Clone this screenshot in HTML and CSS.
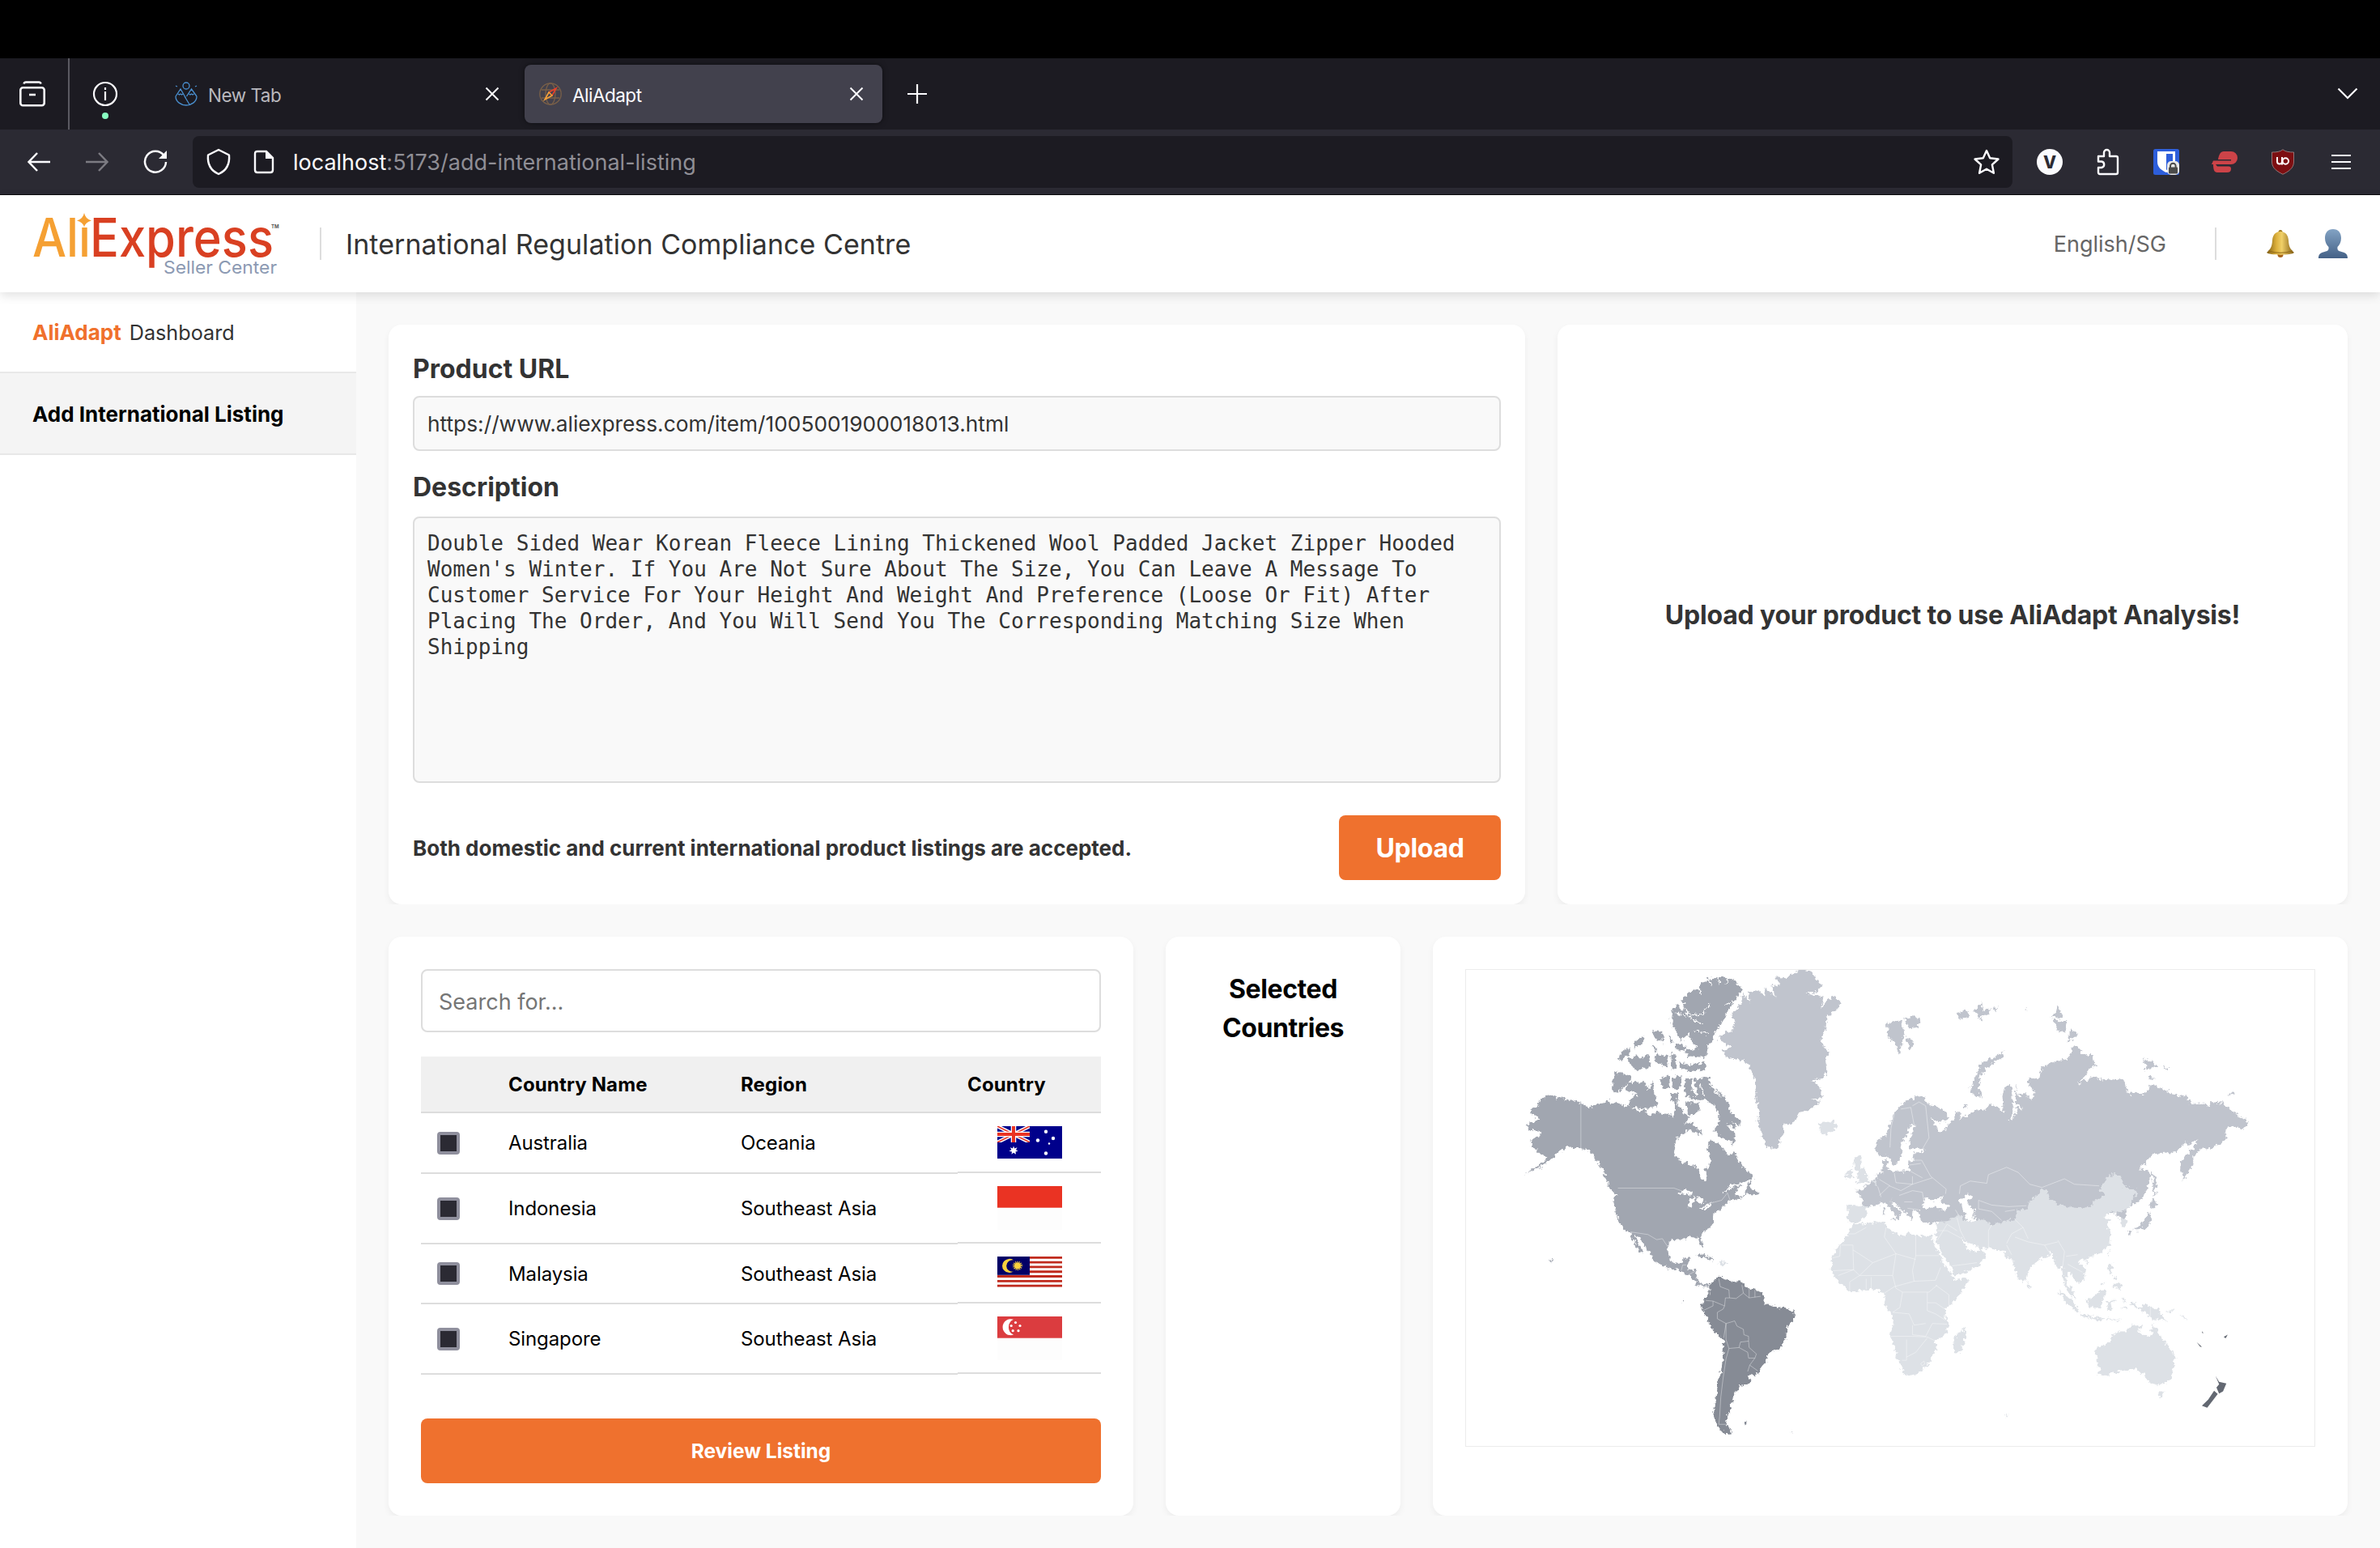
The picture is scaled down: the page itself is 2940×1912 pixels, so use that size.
FILE: index.html
```html
<!DOCTYPE html>
<html lang="en">
<head>
<meta charset="utf-8">
<title>AliAdapt</title>
<link rel="stylesheet" href="styles.css">
</head>
<body>
<div class="notch"></div>
<div class="tabs">
  <div class="tabs-view"><svg width="32" height="32" viewBox="0 0 32 32" fill="none" stroke="#fbfbfe" stroke-width="2.6"><path d="M5.500 3.500q.5-2 2.500-2h16q2 0 2.500 2"/><rect x="1.300" y="8.300" width="29.400" height="22" rx="3"/><path d="M12 17h8"/></svg></div>
  <div class="pinned"><svg width="32" height="32" viewBox="0 0 32 32" fill="none" stroke="#fbfbfe" stroke-width="2.200"><circle cx="16" cy="16" r="14"/><path d="M16 13v11M16 8v3"/></svg><i class="pin-dot"></i></div>
  <div class="tab">
    <svg width="28" height="32" viewBox="0 0 28 32" fill="none" stroke="#4a90d0" stroke-width="1.300"><circle cx="14" cy="6" r="4"/><path d="M1 6l2 1M25 7l2-1M1 19L7 10l6.500 11M14.500 19L20.500 10l6.500 9M4 16l1.500 1 1.500-1 1.500 1 1.500-1M17.500 16l1.500 1 1.500-1 1.500 1 1.500-1M12 19l6 10M1 19c0 7 7 11 13 11s13-4 13-11"/></svg>
    <span class="tab-title">New Tab</span>
    <svg width="18" height="18" viewBox="0 0 18 18" fill="none" stroke="#fbfbfe" stroke-width="2"><path d="M1.500 1.500l15 15M16.500 1.500l-15 15"/></svg>
  </div>
  <div class="tab tab-on">
    <svg width="28" height="32" viewBox="0 0 28 32" fill="none" stroke="#7a6048" stroke-width="1.300"><circle cx="14" cy="16" r="13.200"/><ellipse cx="14" cy="16" rx="6" ry="13.200"/><path d="M3 11h22M3 21h22"/><path d="M12 14l9-5-5 9" stroke="#e8402a" stroke-width="1.600"/><path d="M12 14l-5 9 9-5z" stroke="#f6a13a" stroke-width="1.600"/></svg>
    <span class="tab-title">AliAdapt</span>
    <svg width="18" height="18" viewBox="0 0 18 18" fill="none" stroke="#fbfbfe" stroke-width="2"><path d="M1.500 1.500l15 15M16.500 1.500l-15 15"/></svg>
  </div>
  <svg class="tab-new" width="26" height="26" viewBox="0 0 26 26" fill="none" stroke="#fbfbfe" stroke-width="2.200"><path d="M13 1v24M1 13h24"/></svg>
  <svg class="tab-all" width="26" height="16" viewBox="0 0 26 16" fill="none" stroke="#fbfbfe" stroke-width="2.200"><path d="M1.500 1.500L13 13 24.500 1.500"/></svg>
</div>
<div class="toolbar">
  <div class="nav">
    <svg width="30" height="30" viewBox="0 0 30 30" fill="none" stroke="#fbfbfe" stroke-width="2.500"><path d="M29 15H2.500M13 4L2.500 15 13 26"/></svg>
    <svg width="30" height="30" viewBox="0 0 30 30" fill="none" stroke="#7c7b82" stroke-width="2.500"><path d="M1 15h26.500M17 4l10.500 11L17 26"/></svg>
    <svg width="30" height="30" viewBox="0 0 30 30" fill="none" stroke="#fbfbfe" stroke-width="2.500"><path d="M25.500 7A13 13 0 1 0 28 15"/><path d="M29 1v10H19z" fill="#fbfbfe" stroke="none"/></svg>
  </div>
  <div class="urlbar">
    <svg width="32" height="34" viewBox="0 0 32 34" fill="none" stroke="#fbfbfe" stroke-width="2.400" stroke-linejoin="round"><path d="M16 2L29 8.500C30 20 25 28 16 32 7 28 2 20 3 8.500z"/></svg>
    <svg class="page-icon" width="26" height="30" viewBox="0 0 26 30" fill="none" stroke="#fbfbfe" stroke-width="2.400"><path d="M16 2H5Q2 2 2 5v20q0 3 3 3h16q3 0 3-3V10z"/><path d="M15 1v10h10z" fill="#fbfbfe" stroke="none"/></svg>
    <span class="url"><b>localhost</b>:5173/add-international-listing</span>
    <svg width="34" height="34" viewBox="0 0 34 34" fill="none" stroke="#fbfbfe" stroke-width="2.400" stroke-linejoin="round"><path d="M17 3l4.200 9.300 10.300 1.200-7.600 6.900 2 10.400L17 25.700 8.100 30.800l2-10.400-7.600-6.900 10.300-1.200z"/></svg>
  </div>
  <div class="extensions">
    <svg width="32" height="32" viewBox="0 0 32 32"><circle cx="16" cy="16" r="16" fill="#fbfbfe"/><text x="16" y="23.500" class="ext-v">V</text></svg>
    <svg width="32" height="34" viewBox="0 0 32 34" fill="none" stroke="#fbfbfe" stroke-width="2.400" stroke-linejoin="round"><path d="M4 10h7V5.500a3.500 3.500 0 0 1 7 0V10h8q2 0 2 2v18q0 2-2 2H6q-2 0-2-2v-6h4a3.800 3.800 0 0 0 0-7.500H4z"/></svg>
    <svg width="32" height="32" viewBox="0 0 32 32"><rect width="32" height="32" rx="2.500" fill="#2d5edb"/><path d="M5 3h22v13c0 7-6 11-11 13C11 27 5 23 5 16z" fill="#fff"/><path d="M16 6h8v10c0 5-4 8-8 10z" fill="#2d5edb"/><rect x="17" y="15" width="15" height="17" rx="5" fill="#e8e8e8"/><path d="M21 23v-2a3.300 3.300 0 0 1 6.600 0v2" fill="none" stroke="#4a4a4a" stroke-width="2"/><rect x="19" y="22.500" width="11" height="8" rx="1" fill="#4a4a4a"/></svg>
    <svg width="32" height="28" viewBox="0 0 32 28" fill="#cc4348"><path d="M15 1h9a8 8 0 0 1 0 16H0l2-4.500h22V11H8C9 5 11 1 15 1z"/><path d="M2 17h3l2 2.500h14q3 0 3 3 0 4.500-5 4.500H7C3 27 2 23 2 17z"/></svg>
    <svg width="30" height="32" viewBox="0 0 30 32"><path d="M15 .7C18 3.500 23 4 28.500 4v12c0 8-7 12-13.500 15.300C8.500 28 1.500 24 1.500 16V4C7 4 12 3.500 15 .7z" fill="#7d0f12" stroke="#a58a8a" stroke-width=".8"/><path d="M8 10v5.500a3 3 0 0 0 6 0V10M14 19.500V15" fill="none" stroke="#fff" stroke-width="2"/><circle cx="18.300" cy="15" r="3.700" fill="none" stroke="#fff" stroke-width="2"/></svg>
    <svg width="26" height="20" viewBox="0 0 26 20" stroke="#fbfbfe" stroke-width="2.200"><path d="M1 2h24M1 10h24M1 18h24"/></svg>
  </div>
</div>
<header class="header">
  <svg class="logo" width="316" height="92" viewBox="34 254 316 92">
    <text x="40" y="316" class="logo-a" textLength="72" lengthAdjust="spacingAndGlyphs">Ali</text>
    <rect x="97" y="258" width="15" height="21" fill="#fff"/>
    <path d="M104 262q1.500 7.500 9 9.500-7.500 2-9 8-1.500-6-9-8 7.500-2 9-9.500z" fill="#f5a033"/>
    <text x="111" y="316" class="logo-e" textLength="227" lengthAdjust="spacingAndGlyphs">Express</text>
    <text x="202" y="337" class="logo-s" textLength="140" lengthAdjust="spacingAndGlyphs">Seller Center</text>
    <text x="335" y="281" class="logo-t">TM</text>
  </svg>
  <i class="bar"></i>
  <h1>International Regulation Compliance Centre</h1>
  <span class="lang">English/SG</span>
  <i class="bar"></i>
  <svg class="bell" width="36" height="36" viewBox="0 0 36 36">
    <defs><linearGradient id="gold"><stop offset="0" stop-color="#7d5a10"/><stop offset=".35" stop-color="#dcb03c"/><stop offset=".55" stop-color="#f0d068"/><stop offset="1" stop-color="#805a10"/></linearGradient></defs>
    <circle cx="18" cy="31.500" r="3.500" fill="#a8641c"/><circle cx="18" cy="3.500" r="2.500" fill="#a07a1e"/>
    <path d="M18 3c7 0 9.500 5 10 11 .4 7 1.500 10 7 15-3 3.500-31 3.500-34 0C6.500 24 7.600 21 8 14c.5-6 3-11 10-11z" fill="url(#gold)"/>
    <path d="M3 27q15 4.500 30 0" fill="none" stroke="#8f6715" stroke-width="1.200"/>
  </svg>
  <svg width="36" height="36" viewBox="0 0 36 36">
    <defs><linearGradient id="steel" x2="0" y2="1"><stop offset="0" stop-color="#83a3c4"/><stop offset="1" stop-color="#446186"/></linearGradient></defs>
    <path d="M18 0c6.500 0 10 4.500 10 11 0 5-2 8.500-4.500 11-.5 4 1 5 5 6 5 1 7.500 3 7.500 8H0c0-5 2.500-7 7.500-8 4-1 5.500-2 5-6C10 19.500 8 16 8 11 8 4.500 11.500 0 18 0z" fill="url(#steel)"/>
  </svg>
</header>
<div class="body">
  <nav class="sidebar">
    <a class="side-item"><b>AliAdapt</b> <span>Dashboard</span></a>
    <a class="side-item side-on">Add International Listing</a>
  </nav>
  <main class="main">
    <div class="row row-top">
      <section class="card form">
        <h2>Product URL</h2>
        <div class="field">https://www.aliexpress.com/item/1005001900018013.html</div>
        <h2 class="h-desc">Description</h2>
        <div class="area">Double Sided Wear Korean Fleece Lining Thickened Wool Padded Jacket Zipper Hooded
Women's Winter. If You Are Not Sure About The Size, You Can Leave A Message To
Customer Service For Your Height And Weight And Preference (Loose Or Fit) After
Placing The Order, And You Will Send You The Corresponding Matching Size When
Shipping</div>
        <div class="form-foot"><p>Both domestic and current international product listings are accepted.</p><button class="btn btn-up">Upload</button></div>
      </section>
      <section class="card notice">Upload your product to use AliAdapt Analysis!</section>
    </div>
    <div class="row row-low">
      <section class="card picker">
        <div class="search">Search for...</div>
        <div class="table">
          <div class="tr th"><span></span><span>Country Name</span><span>Region</span><span>Country</span></div>
          <div class="tr"><span><i class="check"></i></span><span>Australia</span><span>Oceania</span><span class="flag">
            <svg width="80" height="40" viewBox="0 0 80 40"><rect width="80" height="40" fill="#00008b"/><svg width="40" height="20" viewBox="0 0 40 20"><path d="M0 0l40 20M40 0L0 20" stroke="#fff" stroke-width="4.500"/><path d="M0 0l40 20M40 0L0 20" stroke="#e8372a" stroke-width="1.600"/><path d="M20 0v20M0 10h40" stroke="#fff" stroke-width="6.500"/><path d="M20 0v20M0 10h40" stroke="#ea3323" stroke-width="4"/></svg><g fill="#fff"><path d="M20 24.500l1.300 3.100 3.200-1.300-1.500 3 2.600 1.400-3.100.8.500 3.300-3-2-2.500 2 .5-3.300-3.600-.8 3-1.400-1.500-3 3.200 1.300z"/><circle cx="60" cy="6.700" r="2.200"/><circle cx="50" cy="17.500" r="2.200"/><circle cx="69" cy="15" r="2.200"/><circle cx="60" cy="33.500" r="2.200"/><circle cx="64" cy="21.500" r="1.200"/></g></svg></span></div>
          <div class="tr tall"><span><i class="check"></i></span><span>Indonesia</span><span>Southeast Asia</span><span class="flag">
            <svg width="80" height="54" viewBox="0 0 80 54"><rect width="80" height="54" fill="#fdfdfd"/><rect width="80" height="26.700" fill="#ea3323"/></svg></span></div>
          <div class="tr short"><span><i class="check"></i></span><span>Malaysia</span><span>Southeast Asia</span><span class="flag">
            <svg width="80" height="38" viewBox="0 0 80 40" preserveAspectRatio="none"><rect width="80" height="40" fill="#fff"/><path d="M0 1.400h80M0 7.500h80M0 13.600h80M0 19.700h80M0 25.800h80M0 31.900h80M0 38h80" stroke="#c02a1d" stroke-width="3"/><rect width="40" height="24" fill="#010066"/><path d="M20 4.500a9 9 0 1 0 0 15 7.600 7.600 0 1 1 0-15z" fill="#f8d13e"/><circle cx="25" cy="12" r="4" fill="#f8d13e"/><circle cx="25" cy="12" r="4.800" fill="none" stroke="#f8d13e" stroke-width="2.500" stroke-dasharray="1 1.150"/></svg></span></div>
          <div class="tr tall"><span><i class="check"></i></span><span>Singapore</span><span>Southeast Asia</span><span class="flag">
            <svg width="80" height="54" viewBox="0 0 80 54"><rect width="80" height="54" fill="#fdfdfd"/><rect width="80" height="26.700" fill="#db3c3f"/><g fill="#fff"><path d="M20 3.800a10 10 0 1 0 0 18.800 10.300 10.300 0 0 1 0-18.800z"/><circle cx="22.500" cy="7.500" r="1.600"/><circle cx="17.200" cy="11.500" r="1.600"/><circle cx="28" cy="11.500" r="1.600"/><circle cx="19.200" cy="17.700" r="1.600"/><circle cx="26" cy="17.700" r="1.600"/></g></svg></span></div>
        </div>
        <button class="btn btn-review">Review Listing</button>
      </section>
      <section class="card selected"><span>Selected</span><span>Countries</span></section>
      <section class="card mapcard">
        <svg class="map" width="1050" height="590" viewBox="1810 1197 1050 590">
          <defs><filter id="coast" x="-2%" y="-2%" width="104%" height="104%" color-interpolation-filters="sRGB"><feTurbulence type="fractalNoise" baseFrequency=".08" numOctaves="4" seed="4"/><feDisplacementMap in="SourceGraphic" scale="22" xChannelSelector="R" yChannelSelector="G"/></filter></defs>
          <g transform="translate(1800 1180) scale(.357143 .39541)">
            <g filter="url(#coast)">
            <g class="north">
              <path d="M320 433L345 444 375 450 410 457 428 464 465 475 482 470 500 462 525 452 530 466 545 458 575 468 600 473 618 486 650 484 662 500 690 490 735 497 748 508 757 462 775 480 800 508 785 530 815 520 830 540 850 560 835 560 820 545 800 548 775 558 760 575 750 600 755 630 780 645 835 665 842 695 858 706 865 690 858 665 875 655 877 635 868 610 872 578 900 585 925 605 935 625 958 612 968 635 985 660 1005 675 1022 685 1020 700 985 710 945 720 915 745 960 722 985 715 965 735 962 750 985 755 1010 712 1018 705 1015 725 1040 740 1040 748 1000 742 985 757 945 768 925 780 915 795 895 800 885 812 885 835 875 850 848 865 843 875 852 905 850 916 842 905 832 882 800 880 780 888 755 886 733 895 730 925 735 950 752 963 775 960 783 945 805 944 798 965 795 980 825 983 830 990 826 1010 835 1022 850 1030 870 1022 872 1035 850 1035 830 1028 815 1012 800 998 775 990 755 978 735 978 700 965 678 955 676 940 655 915 630 885 612 872 625 895 645 930 632 925 615 900 600 870 572 852 560 830 547 800 545 770 550 745 530 720 515 695 500 665 480 640 460 612 430 605 400 602 380 596 350 615 320 640 290 660 232 686 270 665 315 630 285 620 270 605 255 595 260 575 290 558 285 548 250 545 240 530 270 515 287 518 268 500 250 482 275 475 285 455z"/>
              <path d="M925 70L960 75 985 105 965 140 940 165 925 195 905 225 890 240 885 270 865 280 868 310 850 318 800 315 790 300 830 290 815 270 800 245 775 265 755 235 740 210 745 175 760 152 775 170 790 150 775 140 800 115 835 105 840 85 880 72z"/>
              <path d="M765 335L800 340 855 335 858 358 800 362 770 355zM590 320L620 315 640 320 665 308 672 348 625 360 600 345zM555 322L575 295 600 290 590 315 570 328zM610 275L645 250 640 275 615 290zM675 235L715 240 712 275 690 265zM728 250L750 270 738 275zM680 315L730 310 728 350 690 335zM740 305L755 310 758 355 742 352zM673 280L685 285 692 310zM755 275L790 285 785 300 755 290zM545 365L600 375 605 385 575 410 555 435 535 415zM590 395L650 395 660 420 680 390 685 445 700 465 660 480 600 475 590 455 625 435 582 420zM700 385L730 375 735 420 710 415zM745 380L778 375 770 420 745 415zM738 430L765 435 762 465 740 455zM790 385L815 380 810 420 830 440 822 385 870 382 885 415 920 435 942 465 945 490 980 515 975 530 955 520 965 545 930 525 962 560 955 590 920 570 885 548 905 520 905 495 890 470 860 450 820 455 785 430zM808 530L840 545 840 560 810 550zM790 455L840 465 835 490 800 500zM518 708L558 740 550 746 520 718zM823 938L845 932 890 950 880 953 845 941zM320 950l10 5-5 5z"/>
            </g>
            <path class="lakes" d="M768 745L795 728 820 745 800 750zM800 790L802 765 820 755 810 790zM825 752L850 758 855 770 840 780zM832 794L885 770 865 790z"/>
            <path class="fjords" d="M780 162l25 24 40 0 30-32M800 190l50 28M755 180l40 12M850 120l-20-20M880 95l-8-22M905 90v-18M930 90l5-18M925 155l30-10M865 245l-40-10M840 400l15 40M870 400l40 40M690 470l40-40"/>
            <path class="mid" d="M1185 43L1225 50 1235 65 1262 95 1245 112 1205 120 1250 125 1268 135 1255 170 1280 140 1300 130 1332 147 1310 170 1278 195 1275 230 1262 260 1265 285 1285 295 1275 330 1278 370 1260 385 1230 390 1255 410 1262 445 1220 450 1255 458 1225 482 1190 487 1165 522 1130 530 1128 560 1115 575 1110 605 1070 597 1055 560 1040 520 1042 480 1032 440 1030 390 1010 350 985 325 935 322 920 300 950 285 905 265 915 245 955 235 962 205 950 185 980 150 990 120 1015 150 1005 118 1045 108 1065 130 1065 100 1100 130 1090 95 1120 90 1095 70 1140 68z"/>
            <path class="light" d="M1245 525L1262 535 1245 545 1275 560 1305 548 1317 535 1300 518 1270 522zM903 955L940 962 925 966 903 964z"/>
            <path class="south" d="M908 1003L925 1012 950 1018 985 1018 990 1030 1010 1042 1045 1048 1060 1065 1060 1085 1105 1098 1135 1100 1165 1112 1168 1130 1140 1162 1138 1195 1120 1225 1075 1243 1070 1270 1055 1285 1035 1312 1008 1310 1015 1330 1005 1342 977 1345 972 1362 958 1362 958 1385 942 1405 950 1415 930 1450 932 1465 955 1493 930 1495 900 1475 888 1440 890 1400 898 1370 902 1330 915 1290 920 1240 922 1198 885 1172 865 1135 847 1108 850 1080 872 1060 872 1030 885 1015zM988 1460l18-3-8 8zM1150 1485l12 7-5-1zM775 1082h6v4z"/>
            </g>
            <path class="lines" d="M428 464V604L455 612 500 665M556 727H750L790 740M860 778L915 765 935 742 945 768M600 864L660 872 690 888 710 885 728 910M775 985l5-18 12 0M800 998l25-12M905 1010L910 1035 940 1045 942 1070 965 1072 990 1055 985 1030M1010 1042V1070M1030 1045V1068M990 1055L1010 1070 1050 1065M860 1078L885 1080 925 1095 928 1070 942 1070M885 1080V1095L850 1110M925 1095L920 1105 900 1115 900 1135 930 1150 960 1142 968 1158 990 1168 992 1185 1008 1190 1008 1205 980 1208 975 1225 940 1228 930 1200 930 1150 922 1195M975 1225L1005 1240 1008 1258 1030 1258 1035 1245 1010 1225 1008 1205M1030 1258L1012 1280 1005 1300M1012 1280L1040 1298M940 1228L930 1260 920 1320 912 1380 908 1440 905 1465 930 1465"/>
          </g>
          <g transform="translate(2240 1180) scale(.40816 .39541)">
            <g filter="url(#coast)">
            <path class="mid" d="M190 580L215 565 235 525 245 495 265 465 295 450 320 440 345 450 350 465 380 475 408 495 405 515 385 522 355 508 370 530 385 555 400 545 405 530 430 515 430 485 442 495 440 510 490 485 525 482 530 462 550 470 575 490 572 440 580 405 600 402 602 450 606 490 595 518 583 515 600 520 615 490 612 475 635 480 612 465 614 400 618 440 640 430 660 450 668 430 650 400 655 385 685 380 690 350 730 330 765 325 780 310 778 290 795 280 812 295 810 308 845 312 852 345 835 360 802 402 840 380 855 385 910 392 915 385 942 392 950 430 960 440 965 425 1000 437 1020 405 1055 415 1080 430 1130 440 1142 465 1190 465 1205 475 1203 457 1240 462 1285 500 1318 522 1303 545 1265 530 1245 548 1250 575 1210 600 1175 605 1150 625 1150 655 1130 685 1117 706 1110 670 1112 645 1150 600 1165 575 1135 590 1125 585 1100 615 1030 618 985 668 1015 672 1020 690 1010 735 985 770 965 782 945 795 945 820 930 825 920 808 700 800 615 828 540 842 500 825 435 832 375 832 345 838 325 825 320 800 300 800 298 830 275 800 250 775 235 765 232 760 245 785 268 800 265 810 255 825 245 805 215 780 205 775 175 785 150 782 148 755 130 735 150 730 170 710 190 700 188 685 210 680 208 640 225 640 225 670 260 675 290 672 288 645 302 640 305 615 330 615 340 605 295 605 288 585 305 550 305 530 290 532 285 555 262 590 270 610 255 650 240 655 228 625 200 630 190 610z"/>
            <path class="mid" d="M223 212L270 205 275 240 262 308 243 270 225 250zM272 195L300 190 323 200 315 225 290 228zM282 252L308 280 290 290zM435 180L470 170 468 195 445 200zM485 175L510 145 515 175 535 165 530 185 500 190zM538 168L557 160 550 175zM500 192l15 2-8 10zM575 300L578 315 530 345 510 370 498 410 510 445 478 432 475 415 490 380 505 340 545 318zM742 155L755 195 720 198zM728 202L765 205 765 242 740 235zM782 228L800 252 768 270zM998 325L1025 330 1042 345 1005 358zM1052 345L1078 352 1070 358zM1250 437L1268 428 1272 435zM1015 376L1034 388 1018 388zM640 168h8v5zM452 468h12v8zM1024 675L1032 680 1040 720 1030 755 1026 710zM1025 762L1045 778 1018 792zM1018 800L1024 825 1015 848 985 858 965 858 990 845 1005 825zM953 860L967 862 958 874zM210 785h6v25h-6zM235 822l18 2-6 8z"/>
            <path class="sea" d="M328 790L340 755 362 768 395 750 385 768 412 785 405 797 370 788zM443 765L465 745 483 755 465 770 485 795 488 832 465 830 455 800zM205 780l12-8 30 40-10 5z"/>
            <path class="light" d="M430 812L450 815 455 825 485 832 500 823 525 828 540 842 590 828 610 825 615 800 645 792 660 765 680 745 692 725 712 745 715 760 745 780 805 790 840 785 845 770 885 750 865 738 890 690 910 683 928 692 940 722 980 737 962 770 960 785 920 805 905 815 908 798 878 815 890 825 905 828 888 845 900 870 898 900 870 930 830 942 825 955 812 945 800 955 825 985 822 1005 800 1025 785 1000 768 990 765 1005 768 1030 785 1045 793 1070 775 1060 758 1020 755 970 740 980 730 950 715 925 710 945 690 945 650 980 648 1005 632 1028 615 1000 603 950 585 945 575 920 535 915 495 912 450 885 455 900 475 925 500 920 502 910 522 940 500 970 460 990 425 1000 415 970 385 925 370 890 375 832 405 830z"/>
            <path class="light" d="M120 840L215 832 220 850 250 870 275 880 285 865 310 875 365 878 358 885 375 920 395 965 420 1000 425 1015 468 1008 465 1025 440 1065 400 1105 398 1130 406 1150 405 1180 370 1205 372 1235 358 1245 355 1265 320 1305 278 1312 265 1285 250 1250 245 1215 232 1190 242 1150 240 1125 215 1090 218 1060 190 1042 155 1045 112 1052 80 1025 55 990 58 940 85 895 105 870zM460 1158L464 1180 445 1242 430 1243 423 1220 430 1185 450 1175zM103 778L165 782 158 815 140 832 110 835 105 820zM122 628L145 630 140 655 165 685 165 705 130 715 140 700 130 690 138 675 125 665zM100 675L115 662 120 690 98 700zM175 705L195 710 195 722zM925 825L945 820 948 845 932 850z"/>
            <path class="light" d="M900 918L895 937 891 928zM822 958L833 955 828 963zM648 1020L657 1035 650 1042zM893 963L905 965 903 995 892 985zM905 1030L928 1022 932 1042 915 1040zM905 1000l15 8-4 12zM885 1015l-15 20 3-8zM740 1047L760 1055 800 1095 805 1115 795 1115 765 1085zM805 1118L860 1130 885 1135 860 1139 810 1127zM825 1073L850 1065 875 1040 885 1050 870 1100 835 1102zM890 1080L920 1073 898 1087 905 1105 890 1114zM890 1134l40 2-40 2zM915 1143l18-6-12 8zM930 1100h22v3h-22zM935 1070l8 10-5 5zM958 1088L975 1085 985 1100 1000 1092 1045 1105 1060 1130 1077 1146 1055 1138 1020 1137 1010 1120 985 1105zM1066 1116L1088 1107 1080 1118zM1100 1117l45 25-20-8zM1028 1150L1045 1185 1060 1205 1085 1232 1096 1268 1085 1305 1073 1335 1045 1342 1015 1335 1002 1305 990 1310 978 1293 930 1298 880 1314 862 1308 866 1290 852 1245 855 1225 895 1210 905 1190 925 1175 945 1175 965 1155 992 1158 985 1175 1018 1195zM1043 1362L1062 1362 1058 1383 1048 1380zM578 1434l10 2-6 4z"/>
            </g>
            <path class="kiwi" d="M1217 1313L1228 1332 1250 1337 1240 1362 1228 1369 1220 1350 1228 1340zM1213 1360L1224 1370 1202 1400 1192 1413 1176 1407 1195 1388zM1160 1208l16 15-5 0zM1242 1192l12-7-6 11zM1176 1174l5 6-4 0z"/>
            <path class="lines" d="M245 495L235 540 232 600M265 480L295 475 305 530M300 470L320 458 340 470 350 570 330 605M305 640H328L355 690 402 730 400 745M290 655L325 650M290 672L330 695M245 680L250 710 300 715 300 690M200 750L230 720 265 735 300 715 360 695M232 720L200 700M260 750L300 735 330 740 335 770M275 770L300 770M195 722L205 755M442 745L445 720 475 705 525 712 530 685 585 662 620 678 655 715 692 725 760 698 790 715 865 720M500 765L540 780 590 785 645 782M500 765V792L540 800 570 828M580 800L610 795M430 795L440 812M285 790L320 795"/>
            <path class="lines" d="M105 870L125 870 160 850M85 905H120V920L180 960 250 932 215 880 220 850M58 945L80 940 82 905M120 920L122 982 60 985M75 1000L122 982 140 1000 180 960M110 1050V1020L140 1000 180 1000 240 1000 250 932M160 1045V1010M175 1040V1005M310 875V938H380M310 938L300 985 305 1018 370 1015 385 975M250 932L310 950M215 1055L245 1035 305 1018M240 1000L250 1040 270 1052 350 1052 375 1030M270 1052L262 1100 240 1115 290 1120 305 1155 340 1150M345 1052L345 1110 370 1120 400 1140M370 1030L410 1060V1095M345 1085H370L398 1105M300 1155L300 1185 340 1190 360 1150 405 1152M235 1190H300L345 1192 370 1205M282 1200V1265H268M282 1255L310 1240 345 1195M325 1275l10-8 2 10-8 5zM435 820L445 860 460 890M375 860L405 860 450 885M375 890L405 840 435 860M420 970L460 965 495 960M530 915L530 860 540 842M585 900L600 870 635 850 610 825M610 880L650 895 700 905 740 895M635 850L650 885M600 935L585 905M700 905L715 930M740 890L760 925 755 970M765 940L800 935M770 965L815 990M1020 1098V1137"/>
          </g>
        </svg>
      </section>
    </div>
  </main>
</div>
</body>
</html>
```

FILE: styles.css
```css
* { box-sizing: border-box; }
body {
  margin: 0;
  width: 2940px;
  height: 1912px;
  overflow: hidden;
  display: flex;
  flex-direction: column;
  background: #f9f9f9;
  color: #333;
  font-family: Inter, "Liberation Sans", sans-serif;
}
svg { display: block; flex: none; }
h1, h2, p { margin: 0; }

/* Browser chrome */
.notch { height: 72px; background: #000; flex: none; }
.tabs {
  height: 88px;
  flex: none;
  display: flex;
  align-items: center;
  background: #1c1b22;
  color: #fbfbfe;
  padding-right: 27px;
}
.tabs-view {
  width: 86px;
  height: 88px;
  padding: 28px 0 0 24px;
  border-right: 2px solid #5b5a62;
}
.pinned {
  width: 87px;
  height: 88px;
  margin-right: 25px;
  padding-top: 28px;
  display: flex;
  flex-direction: column;
  align-items: center;
  gap: 7px;
}
.pin-dot { width: 8px; height: 8px; border-radius: 50%; background: #88ffc2; }
.tab {
  width: 442px;
  height: 72px;
  margin-right: 8px;
  padding: 0 23px 0 18px;
  display: flex;
  align-items: center;
  gap: 13px;
  border-radius: 8px;
  font-size: 22.500px;
  letter-spacing: -.5px;
  color: #b9b8be;
}
.tab-on { background: #42414d; color: #fbfbfe; box-shadow: 0 0 6px rgba(0, 0, 0, .5); }
.tab-title { flex: 1; padding-top: 3px; }
.tab-new { margin-left: 22px; }
.tab-all { margin-left: auto; }
.toolbar {
  height: 81px;
  flex: none;
  display: flex;
  align-items: center;
  background: #2b2a33;
  border-bottom: 1px solid #0c0c0d;
}
.nav { width: 238px; padding-left: 33px; display: flex; gap: 42px; }
.urlbar {
  width: 2248px;
  height: 64px;
  padding: 0 15px 0 16px;
  display: flex;
  align-items: center;
  border-radius: 8px;
  background: #1c1b22;
}
.page-icon { margin: 0 23px 0 27px; }
.url { flex: 1; padding-top: 1px; font-size: 27px; color: #8f8e95; }
.url b { font-weight: 400; color: #fbfbfe; }
.extensions {
  padding-left: 10px;
  display: grid;
  grid-template-columns: repeat(6, 72px);
  align-items: center;
  justify-items: center;
}
.ext-v { font-size: 21px; font-weight: 800; text-anchor: middle; fill: #2b2a33; }

/* Page header */
.header {
  height: 120px;
  flex: none;
  display: flex;
  align-items: center;
  padding: 0 40px 0 34px;
  background: #fff;
  box-shadow: 0 4px 12px rgba(0, 0, 0, .12);
  position: relative;
}
.logo-a, .logo-e { font-size: 66px; font-weight: 550; }
.logo-a { fill: #f5a033; }
.logo-e { fill: #d94022; }
.logo-s { font-size: 22px; fill: #8c9ab3; }
.logo-t { font-size: 6px; font-weight: 700; fill: #555; }
.bar { width: 2px; height: 40px; background: #ddd; flex: none; }
.logo + .bar { margin: 0 30px 0 45px; }
.header h1 { flex: 1; padding-top: 2px; font-size: 34px; font-weight: 400; line-height: 44px; letter-spacing: .05px; }
.lang { padding-top: 1px; font-size: 27px; color: #666; margin-right: 60px; }
.bell { margin: 0 29px 0 61px; }

/* Page body */
.body { flex: 1; display: flex; min-height: 0; }
.sidebar { width: 440px; background: #fff; flex: none; }
.side-item {
  height: 100px;
  padding: 1px 40px 0;
  display: flex;
  align-items: center;
  gap: 10px;
  border-bottom: 2px solid #e8e8e8;
  font-size: 26px;
}
.side-item b { font-weight: 700; color: #f0712c; }
.side-item span { font-size: 25.200px; }
.side-on { height: 101px; background: #f4f4f4; color: #000; font-weight: 700; }
.main { flex: 1; padding: 40px; display: flex; flex-direction: column; gap: 40px; }
.row { display: flex; gap: 40px; }
.row-top { height: 716px; }
.row-low { height: 715px; }
.card { background: #fff; border-radius: 16px; box-shadow: 0 4px 8px rgba(0, 0, 0, .05); clip-path: inset(-8px -8px 0); }

.form { width: 1404px; padding: 30px; }
h2 { height: 48px; line-height: 50px; font-size: 32px; font-weight: 700; }
.field {
  height: 68px;
  margin-top: 10px;
  padding: 0 16px;
  border: 2px solid #ddd;
  border-radius: 8px;
  background: #f9f9f9;
  font-size: 26.300px;
  line-height: 66px;
}
.h-desc { margin-top: 21px; line-height: 48px; }
.area {
  height: 329px;
  margin-top: 12px;
  padding: 15px 16px;
  border: 2px solid #ddd;
  border-radius: 8px;
  background: #f9f9f9;
  font: 26px/32px "DejaVu Sans Mono", monospace;
  letter-spacing: .02px;
  white-space: pre;
}
.form-foot { margin-top: 40px; display: flex; align-items: center; justify-content: space-between; }
.form-foot p { font-size: 26px; font-weight: 700; }
.btn {
  height: 80px;
  padding: 0;
  border: 0;
  border-radius: 8px;
  background: #ef712e;
  color: #fff;
  font-family: inherit;
  font-weight: 700;
}
.btn-up { width: 200px; font-size: 32px; letter-spacing: -.3px; }
.notice { flex: 1; display: flex; align-items: center; justify-content: center; font-size: 32px; font-weight: 700; letter-spacing: -.2px; }

.picker { width: 920px; padding: 40px; color: #000; }
.search {
  height: 78px;
  padding: 0 20px;
  border: 2px solid #ddd;
  border-radius: 8px;
  font-size: 27px;
  line-height: 77px;
  color: #757575;
}
.table { margin-top: 30px; font-size: 24px; letter-spacing: -.1px; }
.tr { display: grid; grid-template-columns: 96px 287px 280px 177px; height: 75px; }
.tr > span { display: flex; align-items: center; padding-left: 12px; border-bottom: 2px solid #ddd; }
.tr > span:first-child { padding-left: 20px; }
.th { height: 70px; background: #f0f0f0; font-weight: 700; letter-spacing: .15px; }
.tall { height: 87px; }
.short { height: 74px; }
.tr > .flag { align-items: flex-start; margin-bottom: 1px; padding: 15px 0 0 49px; }
.th + .tr > .flag { padding-top: 16px; }
.check { width: 28px; height: 28px; border: 4px solid #8f8f9d; border-radius: 4px; background: #2b2a33; }
.btn-review { width: 840px; margin-top: 54px; font-size: 24.500px; }

.selected {
  width: 290px;
  padding-top: 41px;
  display: flex;
  flex-direction: column;
  align-items: center;
  font-size: 32px;
  line-height: 48px;
  font-weight: 700;
  letter-spacing: -.4px;
  color: #000;
}
.mapcard { flex: 1; padding: 40px; }
.map { outline: 1px solid #ececec; outline-offset: -1px; }
.north { fill: #a1a6b0; }
.south { fill: #868b95; }
.mid { fill: #c0c4cd; }
.light { fill: #dde1e6; }
.kiwi { fill: #636872; }
.lakes, .sea { fill: #fff; }
.fjords { fill: none; stroke: #fff; stroke-width: 4; }
.lines { fill: none; stroke: #fff; stroke-opacity: .45; stroke-width: 2.200; stroke-linejoin: round; }
```
